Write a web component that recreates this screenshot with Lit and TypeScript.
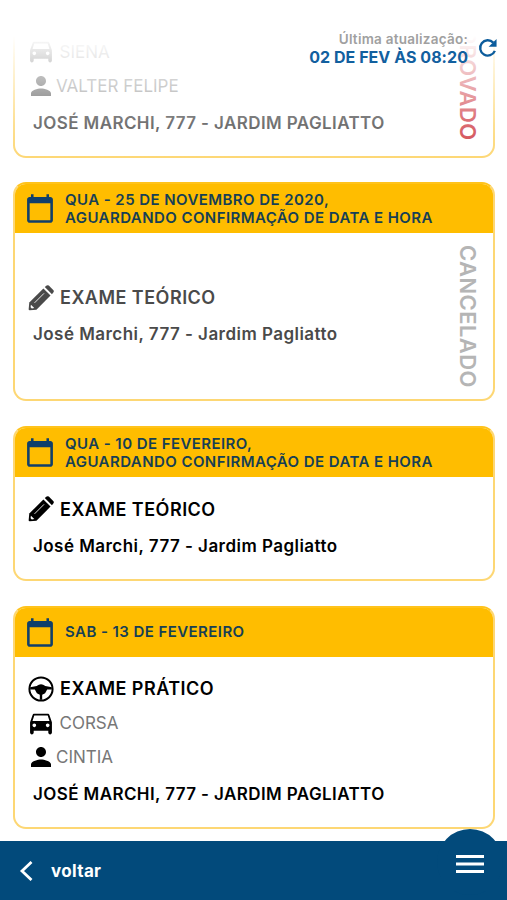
import { LitElement, html, svg, css, nothing } from "lit";
import { customElement, property } from "lit/decorators.js";

type Exam = {
  date: string[];
  kind: "theory" | "practice";
  title?: string;
  car?: string;
  person?: string;
  place: string;
  status?: string;
  tone?: "red";
};

const exams: Exam[] = [
  {
    date: [],
    kind: "practice",
    car: "SIENA",
    person: "VALTER FELIPE",
    place: "JOSÉ MARCHI, 777 - JARDIM PAGLIATTO",
    status: "PROVADO",
    tone: "red",
  },
  {
    date: ["QUA - 25 DE NOVEMBRO DE 2020,", "AGUARDANDO CONFIRMAÇÃO DE DATA E HORA"],
    kind: "theory",
    title: "EXAME TEÓRICO",
    place: "José Marchi, 777 - Jardim Pagliatto",
    status: "CANCELADO",
  },
  {
    date: ["QUA - 10 DE FEVEREIRO,", "AGUARDANDO CONFIRMAÇÃO DE DATA E HORA"],
    kind: "theory",
    title: "EXAME TEÓRICO",
    place: "José Marchi, 777 - Jardim Pagliatto",
  },
  {
    date: ["SAB - 13 DE FEVEREIRO"],
    kind: "practice",
    title: "EXAME PRÁTICO",
    car: "CORSA",
    person: "CINTIA",
    place: "JOSÉ MARCHI, 777 - JARDIM PAGLIATTO",
  },
];

const icons = {
  calendar: svg`<path d="M20 3h-1V1h-2v2H7V1H5v2H4c-1.100 0-2 .9-2 2v16c0 1.100.9 2 2 2h16c1.100 0 2-.9 2-2V5c0-1.100-.9-2-2-2zm0 18H4V8h16v13z"/>`,
  pencil: svg`<path d="M14.200 3.200 1.200 16.200.6 22.400q0 1 1 1l6.200-.6L20.800 9.800z"/><path d="M15.500 1.900 17.200.5q1-.7 2 0l4.300 4.300q.7 1 0 2L22.100 8.500z"/><path class="cut" d="M6 16.500 14.800 7.700"/><path class="nib" d="M2.700 18.200l3.100 3.100-2.300.4-1.100-1.100z"/>`,
  wheel: svg`<circle class="line" cx="12" cy="12" r="10.700"/><path d="M2 10.300 8 9.300Q12 5.800 16 9.300l6 1v2.200h-4.300L15.800 16l-2.700 1.400V22h-2.200v-4.600L8.200 16l-1.900-3.500H2z"/>`,
  car: svg`<path d="M18.920 5.010C18.720 4.420 18.160 4 17.500 4h-11c-.66 0-1.210.42-1.420 1.010L3 11v8.500c0 .83.67 1.500 1.500 1.500S6 20.330 6 19.500V18h12v1.500c0 .83.67 1.500 1.500 1.500s1.500-.67 1.500-1.500V11l-2.080-5.990zM6.500 15C5.670 15 5 14.330 5 13.500S5.670 12 6.500 12s1.500.67 1.500 1.500S7.330 15 6.500 15zm11 0c-.83 0-1.500-.67-1.500-1.500s.67-1.500 1.500-1.500 1.500.67 1.500 1.500-.67 1.500-1.500 1.500zM5 10l1.500-4.500h11L19 10H5z"/>`,
  person: svg`<path d="M12 12c2.210 0 4-1.790 4-4s-1.790-4-4-4-4 1.790-4 4 1.790 4 4 4zm0 2c-2.670 0-8 1.340-8 4v2h16v-2c0-2.660-5.330-4-8-4z"/>`,
};

@customElement("exam-card")
class ExamCard extends LitElement {
  @property({ attribute: false }) exam!: Exam;

  static styles = css`
    :host { display: block; }
    .card {
      box-sizing: border-box;
      border: 2px solid #fdd774;
      border-radius: 13px;
      overflow: hidden;
      background: #fff;
    }
    .head {
      display: flex;
      align-items: center;
      height: 49px;
      padding-left: 9px;
      gap: 9px;
      background: #ffbd00;
      color: #163f55;
      font-size: 15px;
      font-weight: 600;
      line-height: 18px;
      letter-spacing: 0.43px;
    }
    .card:has(.head) { border-top-color: #ffc31c; }
    .head svg { width: 32px; height: 31px; fill: #103f6b; }
    .body { display: flex; align-items: center; justify-content: space-between; }
    .info { padding: 15px 0 13.500px 13px; }
    .status-on .info { color: #4a4a4a; }
    .status-on.tall .body { height: 166px; }
    .status-on .light { color: #8e8e8e; }
    .row { display: flex; align-items: center; height: 34.300px; white-space: nowrap; }
    .row svg { fill: currentColor; flex: none; }
    .title { font-size: 18px; font-weight: 600; letter-spacing: 0.48px; }
    .title svg { width: 26px; height: 26px; margin-right: 6px; }
    .car { font-size: 17px; }
    .car svg { width: 30px; height: 27px; margin: 0 3.500px 0 -2px; transform: scale(1.08); }
    .person { font-size: 17px; }
    .person svg { width: 30px; height: 30px; margin: 0 0 0 -2px; }
    .light { color: #777; }
    .place { height: 39px; padding-left: 5px; font-size: 17px; font-weight: 600; letter-spacing: 0.4px; }
    .tall .place { letter-spacing: 0.46px; }
    .line { fill: none; stroke: currentColor; stroke-width: 1.800; }
    .cut { fill: none; stroke: #fff; stroke-width: 0.800; }
    .nib { fill: #fff; }
    .status {
      writing-mode: vertical-rl;
      font-size: 22px;
      line-height: 26px;
      font-weight: 600;
      letter-spacing: 0.400px;
      margin-right: 12px;
      color: #b5b5b5;
    }
    .red { color: #d0424a; align-self: flex-end; margin-bottom: 15px; }
  `;

  render() {
    const e = this.exam;
    const theory = e.kind === "theory";
    const icon = (i: unknown) => html`<svg viewBox="0 0 24 24">${i}</svg>`;
    return html`<article class="card ${e.status ? "status-on" : ""} ${theory ? "tall" : ""}">
      ${e.date.length ? html`<header class="head">${icon(icons.calendar)}<div>${e.date.map((d) => html`<div>${d}</div>`)}</div></header>` : nothing}
      <div class="body">
        <div class="info">
          <div class="row title">${e.title ? html`${icon(theory ? icons.pencil : icons.wheel)}<span>${e.title}</span>` : nothing}</div>
          ${e.car ? html`<div class="row car">${icon(icons.car)}<span class="light">${e.car}</span></div>` : nothing}
          ${e.person ? html`<div class="row person">${icon(icons.person)}<span class="light">${e.person}</span></div>` : nothing}
          <div class="row place">${e.place}</div>
        </div>
        ${e.status ? html`<div class="status ${e.tone ?? ""}">${e.status}</div>` : nothing}
      </div>
    </article>`;
  }
}

@customElement("app-root")
class AppRoot extends LitElement {
  static styles = css`
    :host {
      display: flex;
      flex-direction: column;
      position: relative;
      width: 100%;
      height: 900px;
      overflow: hidden;
      background: #fff;
      font-family: Inter, "Liberation Sans", sans-serif;
      color: #000;
    }
    .list {
      box-sizing: border-box;
      height: 841px;
      flex: none;
      display: flex;
      flex-direction: column;
      justify-content: flex-end;
      gap: 24.700px;
      padding: 0 12px 12px 13px;
      overflow: hidden;
    }
    .list exam-card { flex: none; }
    .fade {
      position: absolute;
      inset: 0 0 auto 0;
      height: 160px;
      background: linear-gradient(#fff 36px, rgba(255, 255, 255, 0.22) 124px, rgba(255, 255, 255, 0) 160px);
    }
    .update {
      position: absolute;
      top: 29.500px;
      right: 9px;
      display: flex;
      align-items: center;
      gap: 9px;
      text-align: right;
      line-height: 18px;
      font-weight: 600;
    }
    .label { color: #a0a0a0; font-size: 13.500px; letter-spacing: 0.25px; }
    .time { color: #12609f; font-size: 16px; font-weight: 700; letter-spacing: 0.05px; }
    .refresh { width: 21px; height: 22px; fill: none; stroke: #0c5c9c; stroke-width: 2.500; }
    .refresh .tip { fill: #0c5c9c; stroke: none; }
    .bar {
      position: relative;
      flex: 1;
      display: flex;
      align-items: center;
      padding: 0 23px 0 19px;
      background: #024a7b;
      color: #fff;
    }
    .back { width: 14px; height: 20px; fill: none; stroke: #fff; stroke-width: 2.800; margin-right: 18px; }
    .voltar { flex: 1; font-size: 17px; font-weight: 700; letter-spacing: 0.35px; }
    .bump {
      position: absolute;
      right: 4px;
      top: -12px;
      width: 66px;
      height: 66px;
      border-radius: 50%;
      background: #024a7b;
    }
    .menu { position: relative; width: 28px; height: 20px; margin-top: -14px; fill: #fff; }
  `;

  render() {
    return html`
      <main class="list">${exams.map((e) => html`<exam-card .exam=${e}></exam-card>`)}</main>
      <div class="fade"></div>
      <div class="update">
        <div><div class="label">Última atualização:</div><div class="time">02 DE FEV ÀS 08:20</div></div>
        <svg class="refresh" viewBox="0 0 22 22"><path d="M17 5.300A8 8 0 1 0 18.700 14"/><path class="tip" d="M20.500 1.500v8.300h-8.300z"/></svg>
      </div>
      <footer class="bar">
        <svg class="back" viewBox="0 0 14 20"><path d="M12.500 1 3 10l9.500 9"/></svg>
        <span class="voltar">voltar</span>
        <div class="bump"></div>
        <svg class="menu" viewBox="0 0 28 20"><path d="M0 1h28v3H0zM0 8.500h28v3H0zM0 16h28v3H0z"/></svg>
      </footer>`;
  }
}
